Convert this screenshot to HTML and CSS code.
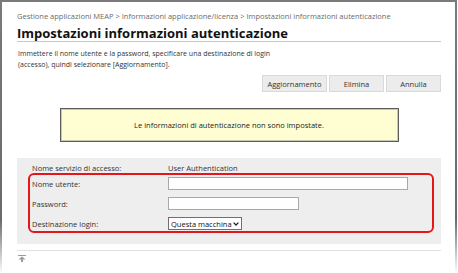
FILE: index.html
```html
<!DOCTYPE html>
<html lang="it">
<head>
<meta charset="utf-8">
<title>Impostazioni informazioni autenticazione</title>
<link rel="stylesheet" href="styles.css">
</head>
<body>
<div class="frame">
  <div class="breadcrumb">Gestione applicazioni MEAP &gt; Informazioni applicazione/licenza &gt; Impostazioni informazioni autenticazione</div>
  <h1 class="title">Impostazioni informazioni autenticazione</h1>
  <p class="intro">Immettere il nome utente e la password, specificare una destinazione di login<br>(accesso), quindi selezionare [Aggiornamento].</p>
  <div class="actions">
    <button class="btn btn-wide">Aggiornamento</button>
    <button class="btn">Elimina</button>
    <button class="btn">Annulla</button>
  </div>
  <div class="message">Le informazioni di autenticazione non sono impostate.</div>
  <div class="panel">
    <div class="row row-info">
      <span class="label">Nome servizio di accesso:</span>
      <span class="value">User Authentication</span>
    </div>
    <div class="highlight">
      <div class="row">
        <span class="label">Nome utente:</span>
        <input class="field field-long" type="text">
      </div>
      <div class="row">
        <span class="label">Password:</span>
        <input class="field field-short" type="password">
      </div>
      <div class="row">
        <span class="label">Destinazione login:</span>
        <div class="select"><span>Questa macchina</span><svg class="chev" width="6" height="4" viewBox="0 0 6 4"><path d="M0.6 0.6 L3 3 L5.4 0.6" fill="none" stroke="#222" stroke-width="1.3"/></svg></div>
      </div>
    </div>
  </div>
  <div class="footer">
    <svg class="top-icon" width="8" height="7" viewBox="0 0 8 7"><rect x="0" y="0" width="8" height="1" fill="#9a9a9a"/><path d="M4 1.6 L7.5 4.4 L0.5 4.4 Z" fill="#9a9a9a"/><rect x="3" y="4.2" width="2" height="2.8" fill="#9a9a9a"/></svg>
  </div>
</div>
</body>
</html>
```

FILE: styles.css
```css
html, body {
  margin: 0;
  padding: 0;
  background: #ffffff;
  overflow: hidden;
}

body {
  font-family: "Open Sans", "Noto Sans", sans-serif;
  font-size: 7.5px;
  color: #333333;
}

.frame {
  width: 457px;
  height: 273px;
  box-sizing: border-box;
  border-style: solid;
  border-width: 2px 2px 0 2px;
  border-image: linear-gradient(to bottom, #7a7a7a 0%, #6a6a6a 80%, #ffffff 100%) 1;
  padding: 0 14px 0 15px;
}

.breadcrumb {
  margin-top: 8px;
  height: 12px;
  line-height: 12px;
  color: #6b6b6b;
  white-space: nowrap;
}

.title {
  margin: 3px 0 0 0;
  height: 16px;
  line-height: 16px;
  font-size: 13px;
  font-weight: bold;
  color: #111111;
  border-bottom: 1px solid #c8c8c8;
}

.intro {
  margin: 6px 0 0 1px;
  line-height: 11px;
  font-size: 7px;
  color: #333333;
}

.actions {
  display: flex;
  justify-content: flex-end;
  gap: 2px;
  margin-top: 5px;
}

.btn {
  box-sizing: border-box;
  width: 55px;
  height: 17px;
  padding: 0;
  font: inherit;
  color: #333333;
  background: #ececec;
  border: 1px solid #d9d9d9;
}

.btn-wide {
  width: 65px;
}

.message {
  box-sizing: border-box;
  width: 339px;
  height: 34px;
  margin: 16px auto 0 auto;
  background: #fefed2;
  border: 1px solid #5c5c5c;
  box-shadow: inset 0 0 0 1px #c9c9b0;
  display: flex;
  align-items: center;
  justify-content: center;
  color: #222222;
}

.panel {
  margin-top: 16px;
  background: #eeeeee;
  padding: 4px 7px 11px 11px;
}

.row {
  display: flex;
  align-items: center;
  height: 13px;
}

.row-info {
  height: 11px;
  padding-left: 4px;
}

.row + .row {
  margin-top: 7px;
}

.label {
  width: 136px;
  flex: none;
  color: #333333;
}

.value {
  color: #333333;
}

.highlight {
  border: 2px solid #e8141c;
  border-radius: 6px;
  padding: 2px 0 1px 2px;
}

.field {
  box-sizing: border-box;
  height: 13px;
  margin: 0;
  padding: 0;
  background: #ffffff;
  border: 1px solid #a9a9a9;
}

.field-long {
  width: 240px;
}

.field-short {
  width: 131px;
}

.select {
  box-sizing: border-box;
  width: 74px;
  height: 13px;
  border: 1px solid #6f6f6f;
  background: #ffffff;
  display: flex;
  align-items: center;
  justify-content: space-between;
  padding: 0 2px 0 2px;
  color: #111111;
  white-space: nowrap;
}

.chev {
  flex: none;
}

.footer {
  margin-top: 6px;
  border-top: 1px solid #e2e2e2;
  padding: 4px 0 0 1px;
}

.top-icon {
  display: block;
}
```
